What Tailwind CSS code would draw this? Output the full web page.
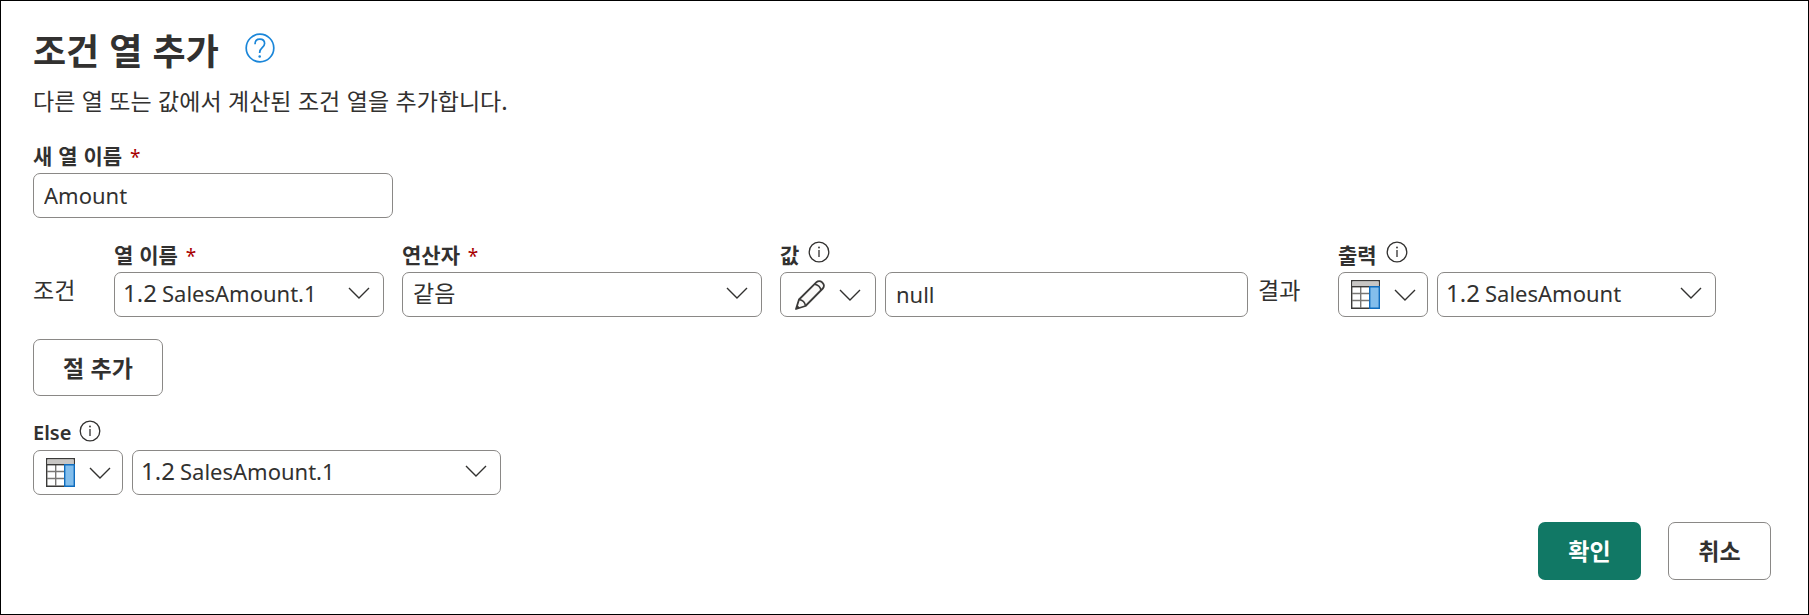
<!DOCTYPE html>
<html lang="ko">

<head>
  <meta charset="UTF-8" />
  <meta name="viewport" content="width=device-width, initial-scale=1.0" />
  <title>조건 열 추가</title>
  <script src="https://cdn.jsdelivr.net/npm/@tailwindcss/browser@4"></script>
</head>

<body class="min-h-screen bg-white border border-black text-[#323130] text-[23px] font-['Noto_Sans_CJK_KR',sans-serif]">

  <!-- Shared icons -->
  <svg class="hidden">
    <symbol id="chevron" viewBox="0 0 22 12">
      <path d="M1 1l10 10L21 1" fill="none" stroke="currentColor" stroke-width="1.4" />
    </symbol>
    <symbol id="info" viewBox="0 0 22 22">
      <circle cx="11" cy="11" r="9.8" fill="none" stroke="currentColor" stroke-width="1.3" />
      <path d="M11 9v7" stroke="currentColor" stroke-width="1.3" />
      <circle cx="11" cy="6.5" r="0.9" fill="currentColor" />
    </symbol>
    <symbol id="column" viewBox="0 0 29 29">
      <path d="M.7 .7h27.6v27.6H.7z" fill="#fff" stroke="#3b3a39" stroke-width="1.4" />
      <path d="M1.4 1.4h26.2v5H1.4z" fill="#c8c6c4" />
      <path d="M1 13.5h17M1 20.5h17M9.7 7v21" stroke="#797775" stroke-width="1.4" />
      <path d="M0 6.7h29" stroke="#3b3a39" stroke-width="1.4" />
      <path d="M18.7 6.7h9.6v21.6h-9.6z" fill="#83beec" stroke="#0f6cbd" stroke-width="1.4" />
    </symbol>
    <symbol id="pencil" viewBox="0 0 30 30">
      <path d="M1 29l3-9.500L21.500 2.200a3.800 3.800 0 0 1 5.400 0l.9.9a3.800 3.800 0 0 1 0 5.400L10.500 26z" fill="#faf9f8" stroke="#3b3a39" stroke-width="1.800" stroke-linejoin="round" />
      <path d="M4 19.500c3.500.500 6 3 6.500 6.500M19.500 4.200c3.500.500 6 3 6.500 6.500" fill="none" stroke="#3b3a39" stroke-width="1.600" />
      <path d="M1 29l1.200-4 2.800 2.800z" fill="#3b3a39" />
    </symbol>
  </svg>

  <form class="pt-[26px] pl-8 pr-[37px] pb-8">
    <header>
      <div class="flex items-start">
        <h1 class="text-4xl leading-[44px] font-bold">조건 열 추가</h1>
        <a href="#" aria-label="도움말" class="ml-[25px] mt-[5px] text-[#1a86d9]">
          <svg class="size-8" viewBox="0 0 32 32" fill="none" stroke="currentColor">
            <circle cx="16" cy="16" r="13.800" stroke-width="1.700" />
            <path d="M11 12.200c0-3.100 2-5 4.800-5s4.800 1.800 4.800 4.400c0 3.900-4.900 4.400-4.900 8.600v.8" stroke-width="1.700" />
            <circle cx="15.700" cy="24.500" r="1.300" fill="currentColor" stroke="none" />
          </svg>
        </a>
      </div>
      <p class="mt-[13px] leading-8">다른 열 또는 값에서 계산된 조건 열을 추가합니다.</p>
    </header>

    <!-- Column name -->
    <div class="mt-[25px]">
      <label for="newName" class="block h-8 text-[21px] leading-7 font-bold">새 열 이름 <span class="ml-0.5 text-[#a80000] text-[19px] font-normal font-['Noto_Sans',sans-serif]">*</span></label>
      <input id="newName" type="text" value="Amount" class="block w-[360px] max-w-full h-[45px] px-[10px] pb-0.5 border border-[#8a8886] rounded-[7px] text-[22px] font-['Noto_Sans',sans-serif]" />
    </div>

    <!-- Condition row -->
    <div class="mt-[22px] mr-[55px] flex items-end">
      <span class="w-[81px] h-[45px] leading-[34px] shrink-0">조건</span>

      <div class="flex-[270] min-w-0">
        <label for="columnName" class="block h-8 text-[21px] leading-7 font-bold">열 이름 <span class="ml-0.5 text-[#a80000] text-[19px] font-normal font-['Noto_Sans',sans-serif]">*</span></label>
        <div class="grid items-center text-[22px] font-['Noto_Sans',sans-serif]">
          <select id="columnName" class="col-start-1 row-start-1 appearance-none w-full h-[45px] pl-[47px] pb-0.5 border border-[#8a8886] rounded-[7px]">
            <option>SalesAmount.1</option>
            <option>SalesAmount</option>
          </select>
          <span class="col-start-1 row-start-1 justify-self-start ml-[9px] mb-1 text-2xl leading-7 pointer-events-none">1.2</span>
          <svg class="col-start-1 row-start-1 justify-self-end mr-[14px] mb-1 w-[22px] h-3 pointer-events-none"><use href="#chevron" /></svg>
        </div>
      </div>

      <div class="ml-[18px] flex-[360] min-w-0">
        <label for="operator" class="block h-8 text-[21px] leading-7 font-bold">연산자 <span class="ml-0.5 text-[#a80000] text-[19px] font-normal font-['Noto_Sans',sans-serif]">*</span></label>
        <div class="grid items-center">
          <select id="operator" class="col-start-1 row-start-1 appearance-none w-full h-[45px] pl-[10px] pb-1 border border-[#8a8886] rounded-[7px]">
            <option>같음</option>
          </select>
          <svg class="col-start-1 row-start-1 justify-self-end mr-[14px] mb-1 w-[22px] h-3 pointer-events-none"><use href="#chevron" /></svg>
        </div>
      </div>

      <div class="ml-[18px] flex-[468] min-w-0">
        <div class="flex items-start h-8">
          <label for="compareValue" class="text-[21px] leading-7 font-bold">값</label>
          <svg class="ml-[9px] mt-px size-[22px]"><use href="#info" /></svg>
        </div>
        <div class="flex gap-[9px]">
          <button type="button" aria-haspopup="listbox" aria-label="값 형식" class="shrink-0 w-24 h-[45px] flex items-center justify-center gap-[14px] border border-[#8a8886] rounded-[7px]">
            <svg class="size-[30px]"><use href="#pencil" /></svg>
            <svg class="w-[22px] h-3"><use href="#chevron" /></svg>
          </button>
          <input id="compareValue" type="text" value="null" class="flex-1 min-w-0 h-[45px] px-[10px] pb-0.5 border border-[#8a8886] rounded-[7px] text-[22px] font-['Noto_Sans',sans-serif]" />
        </div>
      </div>

      <span class="ml-[10px] w-[80px] h-[45px] leading-[34px] shrink-0">결과</span>

      <div class="flex-[378] min-w-0">
        <div class="flex items-start h-8">
          <label for="output" class="text-[21px] leading-7 font-bold">출력</label>
          <svg class="ml-[9px] mt-px size-[22px]"><use href="#info" /></svg>
        </div>
        <div class="flex gap-[9px]">
          <button type="button" aria-haspopup="listbox" aria-label="출력 형식" class="shrink-0 w-[90px] h-[45px] flex items-center justify-center gap-[14px] border border-[#8a8886] rounded-[7px]">
            <svg class="size-[29px]"><use href="#column" /></svg>
            <svg class="w-[22px] h-3"><use href="#chevron" /></svg>
          </button>
          <div class="flex-1 min-w-0 grid items-center text-[22px] font-['Noto_Sans',sans-serif]">
            <select id="output" class="col-start-1 row-start-1 appearance-none w-full h-[45px] pl-[47px] pb-0.5 border border-[#8a8886] rounded-[7px]">
              <option>SalesAmount</option>
              <option>SalesAmount.1</option>
            </select>
            <span class="col-start-1 row-start-1 justify-self-start ml-[9px] mb-1 text-2xl leading-7 pointer-events-none">1.2</span>
            <svg class="col-start-1 row-start-1 justify-self-end mr-[14px] mb-1 w-[22px] h-3 pointer-events-none"><use href="#chevron" /></svg>
          </div>
        </div>
      </div>
    </div>

    <button type="button" class="mt-[22px] block h-[57px] px-[29px] border border-[#8a8886] rounded-[7px] font-bold">절 추가</button>

    <!-- Else -->
    <div class="mt-[22px] w-[468px] max-w-full">
      <div class="flex items-start h-8">
        <label for="elseOutput" class="text-[20px] leading-[30px] font-semibold font-['Noto_Sans',sans-serif]">Else</label>
        <svg class="ml-2 mt-0.5 size-[22px]"><use href="#info" /></svg>
      </div>
      <div class="flex gap-[9px]">
        <button type="button" aria-haspopup="listbox" aria-label="Else 형식" class="shrink-0 w-[90px] h-[45px] flex items-center justify-center gap-[14px] border border-[#8a8886] rounded-[7px]">
          <svg class="size-[29px]"><use href="#column" /></svg>
          <svg class="w-[22px] h-3"><use href="#chevron" /></svg>
        </button>
        <div class="flex-1 min-w-0 grid items-center text-[22px] font-['Noto_Sans',sans-serif]">
          <select id="elseOutput" class="col-start-1 row-start-1 appearance-none w-full h-[45px] pl-[47px] pb-0.5 border border-[#8a8886] rounded-[7px]">
            <option>SalesAmount.1</option>
            <option>SalesAmount</option>
          </select>
          <span class="col-start-1 row-start-1 justify-self-start ml-[9px] mb-1 text-2xl leading-7 pointer-events-none">1.2</span>
          <svg class="col-start-1 row-start-1 justify-self-end mr-[14px] mb-1 w-[22px] h-3 pointer-events-none"><use href="#chevron" /></svg>
        </div>
      </div>
    </div>

    <footer class="mt-[27px] flex justify-end gap-[27px]">
      <button type="submit" class="w-[103px] h-[58px] pb-0.5 rounded-[7px] bg-[#117865] text-white font-bold">확인</button>
      <button type="button" class="w-[103px] h-[58px] pb-0.5 rounded-[7px] border border-[#8a8886] font-bold">취소</button>
    </footer>
  </form>

</body>
</html>
